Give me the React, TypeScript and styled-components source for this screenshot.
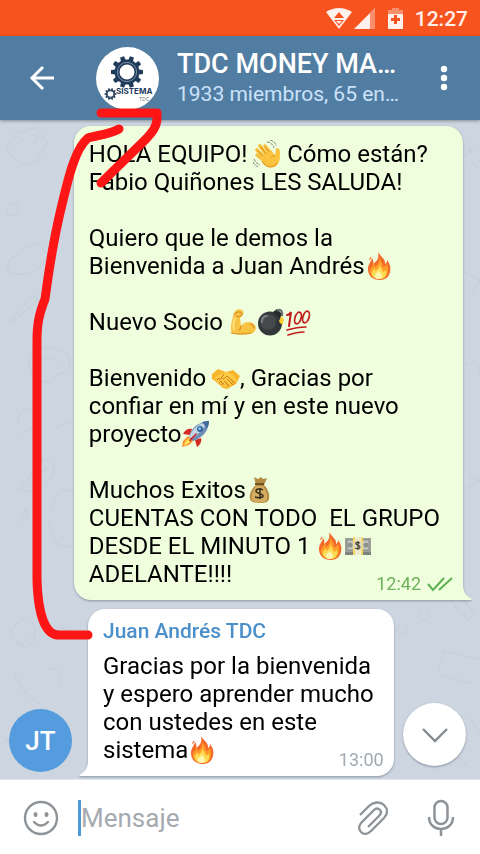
import React from "react";
import styled, { createGlobalStyle, css } from "styled-components";

const GlobalStyle = createGlobalStyle`
  *, *::before, *::after { box-sizing: border-box; }
  body { margin: 0; font-family: Roboto, "Liberation Sans", sans-serif; background: #cdd5e0; }
  button, input { font: inherit; border: 0; padding: 0; margin: 0; background: none; color: inherit; }
  button { cursor: pointer; display: flex; align-items: center; justify-content: center; }
`;

const Screen = styled.div`
  position: relative;
  min-height: 100vh;
  display: flex;
  flex-direction: column;
  overflow: hidden;
`;

const StatusBar = styled.div`
  display: flex;
  align-items: center;
  justify-content: flex-end;
  height: 36px;
  padding: 2px 12px 0;
  background: #f7531e;
  color: #fff0eb;
  font-size: 21px;
  font-weight: 500;
  line-height: 24px;
`;

const StatusIcons = styled.svg`
  margin-right: 11px;
`;

const Header = styled.header`
  position: relative;
  z-index: 1;
  display: flex;
  align-items: center;
  height: 84px;
  padding: 0 14px 0 20px;
  background: #517da2;
  box-shadow: 0 1px 3px rgba(0, 0, 0, 0.35);
`;

const HeaderButton = styled.button`
  flex: none;
  width: 44px;
  height: 48px;
  color: #fff;
`;

const GroupLogo = styled.svg`
  flex: none;
  margin-left: 32px;
`;

const HeaderText = styled.div`
  flex: 1;
  min-width: 0;
  padding: 0 8px 0 18px;
`;

const Title = styled.h1`
  margin: 0;
  color: #fff;
  font-size: 27px;
  font-weight: 500;
  line-height: 32px;
  white-space: nowrap;
`;

const Subtitle = styled.p`
  margin: 0;
  color: #cbe3fb;
  font-size: 21px;
  line-height: 28px;
  white-space: nowrap;
`;

const Chat = styled.main`
  position: relative;
  flex: 1;
  display: flex;
  flex-direction: column;
  justify-content: flex-end;
  gap: 9px;
  padding: 6px 17px 3px 9px;
  background: #cdd5e0;
`;

const Wallpaper = styled.svg`
  position: absolute;
  inset: 0;
  width: 100%;
  height: 100%;
`;

const Bubble = styled.article<{ $own?: boolean }>`
  position: relative;
  display: flex;
  flex-direction: column;
  color: #000;
  font-size: 24px;
  line-height: 28px;
  filter: drop-shadow(0 1px 1px rgba(70, 90, 110, 0.5));
  ${({ $own }) =>
    $own
      ? css`
          align-self: flex-end;
          padding: 14px 10px 6px 15px;
          border-radius: 17px 17px 0 17px;
          background: #efffde;
        `
      : css`
          padding: 8px 10px 6px 15px;
          border-radius: 17px 17px 17px 0;
          background: #fff;
        `}
`;

const Tail = styled.svg<{ $own?: boolean }>`
  position: absolute;
  bottom: 0;
  ${({ $own }) => ($own ? "left: 100%;" : "right: 100%; transform: scaleX(-1);")}
`;

const Sender = styled.h2`
  margin: 0 0 7px;
  color: #4a8fc9;
  font-size: 21px;
  font-weight: 500;
  line-height: 28px;
`;

const Text = styled.p<{ $wide?: boolean }>`
  margin: 0;
  padding-right: ${({ $wide }) => ($wide ? 13 : 10)}px;
  white-space: pre;
`;

const LastLine = styled.div`
  display: flex;
  justify-content: space-between;
  height: 34px;
`;

const Meta = styled.div<{ $own?: boolean }>`
  display: flex;
  align-items: center;
  align-self: flex-end;
  gap: 6px;
  font-size: 18px;
  line-height: 20px;
  color: ${({ $own }) => ($own ? "#70b15c" : "#a1aab3")};
`;

const EmojiSvg = styled.svg`
  display: inline-block;
  vertical-align: -6px;
`;

const IncomingRow = styled.div`
  position: relative;
  display: flex;
  align-items: flex-end;
  gap: 16px;
`;

const Avatar = styled.div`
  display: flex;
  align-items: center;
  justify-content: center;
  width: 63px;
  height: 63px;
  margin-bottom: 4px;
  border-radius: 50%;
  background: #549cdd;
  color: #fff;
  font-size: 26px;
  font-weight: 500;
`;

const ScrollDown = styled.button`
  position: absolute;
  right: 14px;
  bottom: 13px;
  width: 63px;
  height: 63px;
  border-radius: 50%;
  background: #fff;
  box-shadow: 0 1px 2px rgba(60, 80, 100, 0.5);
`;

const Composer = styled.footer`
  position: relative;
  display: flex;
  align-items: center;
  height: 75px;
  padding: 2px 15px 0 17px;
  background: #fff;
  border-top: 1px solid #e3e6ea;
`;

const ToolButton = styled.button`
  flex: none;
  width: 48px;
  height: 48px;
`;

const Field = styled.div`
  flex: 1;
  min-width: 0;
  margin-left: 13px;
  border-left: 3px solid #4d9ad6;
`;

const MessageInput = styled.input`
  display: block;
  width: 100%;
  height: 36px;
  outline: none;
  color: #000;
  font-size: 26px;
  &::placeholder { color: #a5aab0; opacity: 1; }
`;

const Attach = styled(ToolButton)`
  margin-right: 20px;
`;

const Marker = styled.svg`
  position: absolute;
  left: 0;
  top: 0;
  z-index: 2;
  pointer-events: none;
`;

type EmojiName = "wave" | "fire" | "muscle" | "bomb" | "hundred" | "handshake" | "rocket" | "moneybag" | "cash";

const drawings: Record<EmojiName, React.ReactNode> = {
  wave: (
    <>
      <g fill="none" stroke="#f6bd37" strokeLinecap="round">
        <path d="m9 19-5-4" strokeWidth="3.2" />
        <path d="m11 17-7-7" strokeWidth="3.6" />
        <path d="M14 15 7 6" strokeWidth="3.6" />
        <path d="m17 13-5-7" strokeWidth="3.4" />
      </g>
      <path d="M7 18 17 9l5 6c1-2 0-6 2-7 3 0 3 3 3 6 0 7-1 11-6 13-6 2-11-3-14-9Z" fill="#f9c33d" />
      <path d="m10 16-5-5M13 14 8 7M16 12l-4-5M18 18c1-1 3-3 4-2" stroke="#d78e22" strokeWidth=".8" fill="none" />
      <path d="M9 21c4 7 11 8 15 2" stroke="#e8992b" strokeWidth="1.3" fill="none" />
      <path d="M14 2c4 0 6 3 7 6M17 0c4 1 6 4 6 6M1 19c1 3 3 5 6 6M0 22c1 2 3 4 5 5" stroke="#6b6f6a" strokeWidth=".9" strokeDasharray="3 1" fill="none" />
    </>
  ),
  fire: (
    <>
      <path d="M13 0c2 4 8 7 7 12 2-1 2-3 2-4 3 4 4 7 3 12-1 5-5 8-10 8C8 28 3 24 3 17c0-5 3-7 4-11 1 2 2 3 1 6 5-3 6-7 5-12Z" fill="#f46a2a" />
      <path d="M13 3c1 5 5 7 5 12 2 0 3-1 4-3 3 8 0 15-7 15-6 0-11-4-10-9 1-3 3-4 4-7 1 2 0 3 1 4 4-3 5-6 3-12Z" fill="#ff9e27" />
      <path d="M14 11c1 4 4 6 4 9l3-2c1 5-1 9-6 9-6 0-9-3-8-7 1-2 2-3 3-4v3c3-2 5-4 4-8Z" fill="#ffda53" />
      <path d="M14 18c0 3 3 3 3 6 0 2-1 3-3 3-3 0-5-2-4-4 1-2 3-2 4-5Z" fill="#fff6b0" />
      <path d="M4 8c0-2 2-2 2-4 1 2 0 3-2 4Z" fill="#ef622b" />
    </>
  ),
  muscle: (
    <>
      <path d="M5 5c1-3 5-5 8-3 2 1 2 4 0 6l-2 2 1 8c3-5 10-5 13-2 4 4 1 9-4 10-6 1-12 1-18-1C0 19 4 10 5 5Z" fill="#f8c443" />
      <path d="M5 7c3-4 7-4 8-1 0 3-4 3-5 2M12 18c0 2 0 3-2 4M21 16c2 0 4 2 4 4M2 25c8 2 14 1 20 0" stroke="#db8e26" strokeWidth="1.2" fill="none" strokeLinecap="round" />
      <path d="M6 11c-2 4-2 7-1 10" stroke="#ffe07b" strokeWidth="2" fill="none" strokeLinecap="round" />
    </>
  ),
  bomb: (
    <>
      <circle cx="13" cy="15.5" r="12" fill="#33373a" />
      <circle cx="11" cy="14" r="8" fill="#46494c" />
      <path d="M5 14c0-4 2-6 5-6" stroke="#7b8084" strokeWidth="2" fill="none" strokeLinecap="round" />
      <path d="m16 4 4-3 5 5-2 5Z" fill="#252a2e" />
      <path d="M20 3c3-3 6 0 5 5" stroke="#65706c" strokeWidth="2" fill="none" />
      <path d="m24 8 2 2 1 2-1 2v3l-3-2-1-2 1-2Z" fill="#ffcd2e" />
    </>
  ),
  hundred: (
    <g fill="none" stroke="#c01c1a" strokeLinecap="round">
      <path d="M2 7c2 0 3-1 4-3L4 18" strokeWidth="2" />
      <ellipse cx="13" cy="10" rx="3" ry="6" transform="rotate(18 13 10)" strokeWidth="1.8" />
      <ellipse cx="21" cy="9" rx="3" ry="6" transform="rotate(18 21 9)" strokeWidth="1.8" />
      <path d="M2 22c7-2 13-3 19-3M3 27c6-2 11-3 16-3" strokeWidth="1.6" />
    </g>
  ),
  handshake: (
    <>
      <path d="m0 10 6-5 8 3 7-2 7 6-4 8-9 5-4-1-8-7-3-2Z" fill="#f8b62c" />
      <path d="m3 14 5-4 6-2 6 2 5 7c-1 2-2 2-3 1l-5-4 3 5c-1 2-2 2-3 1l-4-4 2 5-3 2-8-7Z" fill="#ffcb45" />
      <path d="m12 10-3 4c2 2 4 0 6-2l8 7M15 15l6 6M12 17l5 5M5 16l2-2 1 2M7 19l2-2 1 2M9 21l2-2 1 2" stroke="#c97b1d" strokeWidth="1" fill="none" />
    </>
  ),
  rocket: (
    <>
      <path d="M10 9C6 8 3 10 1 14l7 1ZM19 18c1 4-1 7-4 9l-2-7Z" fill="#d62824" />
      <path d="m6 16-5 5-1 6 7-2 5-5Z" fill="#ff9130" />
      <path d="m7 18-4 4-1 4 5-3 3-3Z" fill="#ffe551" />
      <path d="M7 17C9 8 16 2 27 1c0 10-7 17-16 20Z" fill="#6d8fb5" />
      <path d="M7 17C10 9 17 3 25 2c-1 5-9 12-15 17Z" fill="#c3d6e6" />
      <path d="M20 2c3-1 5-1 7-1 0 3-1 5-2 7Z" fill="#416b9a" />
      <circle cx="18" cy="9" r="3" fill="#315f94" />
      <circle cx="17.6" cy="8.6" r="1.6" fill="#75bee8" />
      <path d="m7 20 7-7 1 1-7 8Z" fill="#c82e30" />
    </>
  ),
  moneybag: (
    <>
      <path d="m8 1 4 2 3-2 2 2 4-1-3 7c4 4 6 9 5 14-1 3-3 4-9 4S5 26 4 23c-1-5 2-11 6-14Z" fill="#b48b43" />
      <path d="M10 10c-4 5-6 12-3 15 3 2 10 2 13 0 3-5-1-12-3-15Z" fill="#d4ad62" />
      <path d="M9 7h9v2H9Z" fill="#715123" />
      <path d="M17 14c-3-2-7-1-7 1 0 3 7 2 7 5 0 2-5 2-8 1M14 12v11" stroke="#35301e" strokeWidth="1.5" fill="none" />
    </>
  ),
  cash: (
    <>
      <path d="M1 6h26v16H1Z" fill="#9fa29d" />
      <path d="M1 20h26v3H1Z" fill="#7f837d" />
      <path d="M3 8h22v10H3Z" fill="#c6cac2" stroke="#868b83" />
      <circle cx="6" cy="13" r="2.6" fill="#8d938a" />
      <circle cx="22" cy="13" r="2.6" fill="#8d938a" />
      <path d="M9 5h10v18H9Z" fill="#f5d768" />
      <path d="M11 5h6v18h-6Z" fill="#efe9cc" />
      <circle cx="14" cy="13.5" r="4.5" fill="#dedbc0" />
      <path d="M16 11c-2-1-5-1-4 1 1 1 4 1 4 3s-3 2-5 1M14 9v9" stroke="#4d4636" strokeWidth="1.2" fill="none" />
    </>
  ),
};

function Emoji({ name, label }: { name: EmojiName; label: string }) {
  return (
    <EmojiSvg width="28" height="28" viewBox="0 0 28 28" role="img" aria-label={label}>
      {drawings[name]}
    </EmojiSvg>
  );
}

const teeth = [0, 36, 72, 108, 144, 180, 216, 252, 288, 324];

function Gear({ x, y, scale }: { x: number; y: number; scale: number }) {
  return (
    <g transform={`translate(${x} ${y}) scale(${scale})`}>
      {teeth.map((a) => (
        <path key={a} d="M-2.6-11-2-16H2l.6 5Z" fill="#203b5b" transform={`rotate(${a + 18})`} />
      ))}
      <circle r="10" fill="none" stroke="#203b5b" strokeWidth="5" />
      <circle r="9.6" fill="none" stroke="#7f92a5" strokeWidth="1" />
    </g>
  );
}

function Doodles() {
  return (
    <Wallpaper aria-hidden="true">
      <g fill="none" stroke="#bdc6d3" strokeWidth="1.2" opacity=".4">
        <path d="m8 24 9-12 19-4 11 14-10 19-14 4L7 31ZM15 26l8-7M31 16a4 4 0 1 1 0 6M26 32h5" />
        <path d="M8 151q30 12 39-17l-8-10q-14 1-31 18ZM15 145h2m10-7h2m4 8h2M9 201l25-26 4 5-26 22ZM13 84a6 6 0 1 0 0 12 5 5 0 1 0 0-12" />
        <path d="M30 249c-4-17 8-25 23-20 20 0 23 24 5 25-10 13-26 9-28-5m8-5c5-8 20-8 22 0M18 303c0-17 18-18 19-5 0 8-9 14-16 15M56 308l14-6" />
        <path d="m20 369 24-31c19 5 10 29-17 34Zm9-4 18-18M52 388c4-22 19-21 28-11M50 402c0 18 10 28 22 24M21 395l6-6 1 8-8 4Z" />
        <path d="M11 510q18-24 24 0c2 19-20 24-24 0m6 0h2m8 0h2M16 521q8 6 13-4M58 512q12-12 15 6M13 550q9 26 28 34M48 550c9-5 15 6 11 14M5 618q10 11 15 26" />
        <path d="m462 39 12-13m-6 0 5 8m-2 7 8 8M465 153l15 7-8 13M466 245q14-8 14 8M468 353l12 10m-12 5 12-8" />
        <path d="M448 478l20 22 7-6-18-21ZM444 531l36 8M440 555l34 9M444 531l-6 22M424 490a5 5 0 1 1 0 10 5 5 0 0 1 0-10m-22 14a5 5 0 1 1 0 10 5 5 0 0 1 0-10M458 637l12 12M468 596l12 17" />
      </g>
    </Wallpaper>
  );
}

export default function App() {
  return (
    <>
      <GlobalStyle />
      <Screen>
        <StatusBar>
          <StatusIcons width="78" height="24" viewBox="0 0 78 24" aria-hidden="true">
            <path d="M0 5Q13-3 26 5L13 22Z" fill="#fff0eb" />
            <path d="m13 5-5 6h10Zm-5 8h10l-5 6Z" fill="#f7531e" />
            <path d="m10 14 3 3 3-3Z" fill="#fff0eb" />
            <path d="M28 22 49 1v21Z" fill="#fff0eb" />
            <path d="M44 6v16h5V1Z" fill="#f7531e" />
            <path d="M44 6v16h5V1Z" fill="#fff" opacity=".35" />
            <path d="M62 3h4V1h7v2h4v5H62Z" fill="#fff" opacity=".35" />
            <path d="M62 7h15v15H62Z" fill="#fff0eb" />
            <path d="M65 11h3V8h3v3h3v3h-3v3h-3v-3h-3Z" fill="#f7531e" />
          </StatusIcons>
          <time>12:27</time>
        </StatusBar>

        <Header>
          <HeaderButton aria-label="Atrás">
            <svg width="26" height="26" viewBox="0 0 26 26" fill="none" stroke="currentColor" strokeWidth="3">
              <path d="M14 2 3 13l11 11M2 13h23" />
            </svg>
          </HeaderButton>
          <GroupLogo width="63" height="63" viewBox="0 0 63 63" role="img" aria-label="Sistema TDC">
            <circle cx="31.5" cy="31.5" r="31.5" fill="#fff" />
            <Gear x={31} y={25} scale={1} />
            <Gear x={14.5} y={47} scale={0.37} />
            <text x="20" y="47" fontSize="8" fontWeight="700" fill="#243b62" fontFamily="Inter, sans-serif">SISTEMA</text>
            <text x="43" y="54" fontSize="5" fill="#777" fontFamily="Inter, sans-serif">TDC</text>
          </GroupLogo>
          <HeaderText>
            <Title>TDC MONEY MA…</Title>
            <Subtitle>1933 miembros, 65 en…</Subtitle>
          </HeaderText>
          <HeaderButton aria-label="Más opciones">
            <svg width="8" height="26" viewBox="0 0 8 26" fill="currentColor">
              <circle cx="4" cy="4" r="3.2" />
              <circle cx="4" cy="13" r="3.2" />
              <circle cx="4" cy="22" r="3.2" />
            </svg>
          </HeaderButton>
        </Header>

        <Chat>
          <Doodles />
          <Bubble $own>
            <Text $wide>
              HOLA EQUIPO! <Emoji name="wave" label="👋" /> Cómo están?{"\n"}
              Fabio Quiñones LES SALUDA!{"\n\n"}
              Quiero que le demos la{"\n"}
              Bienvenida a Juan Andrés<Emoji name="fire" label="🔥" />{"\n\n"}
              Nuevo Socio <Emoji name="muscle" label="💪" /><Emoji name="bomb" label="💣" /><Emoji name="hundred" label="💯" />{"\n\n"}
              Bienvenido <Emoji name="handshake" label="🤝" />, Gracias por{"\n"}
              confiar en mí y en este nuevo{"\n"}
              proyecto<Emoji name="rocket" label="🚀" />{"\n\n"}
              Muchos Exitos<Emoji name="moneybag" label="💰" />{"\n"}
              {"CUENTAS CON TODO  EL GRUPO\n"}
              DESDE EL MINUTO 1 <Emoji name="fire" label="🔥" /><Emoji name="cash" label="💵" />
            </Text>
            <LastLine>
              <Text>ADELANTE!!!!</Text>
              <Meta $own>
                <time>12:42</time>
                <svg width="26" height="16" viewBox="0 0 26 16" fill="none" stroke="#5fb050" strokeWidth="2" role="img" aria-label="Leído">
                  <path d="m1 8 5 6L17 2M12 14 25 2" />
                </svg>
              </Meta>
            </LastLine>
            <Tail $own width="9" height="16" viewBox="0 0 9 16" aria-hidden="true">
              <path d="M0 0c0 8 3 12 9 15l-1 1H0Z" fill="#efffde" />
            </Tail>
          </Bubble>

          <IncomingRow>
            <Avatar>JT</Avatar>
            <Bubble>
              <Sender>Juan Andrés TDC</Sender>
              <Text>{"Gracias por la bienvenida\ny espero aprender mucho\ncon ustedes en este"}</Text>
              <LastLine>
                <Text>sistema<Emoji name="fire" label="🔥" /></Text>
                <Meta><time>13:00</time></Meta>
              </LastLine>
              <Tail width="9" height="16" viewBox="0 0 9 16" aria-hidden="true">
                <path d="M0 0c0 8 3 12 9 15l-1 1H0Z" fill="#fff" />
              </Tail>
            </Bubble>
          </IncomingRow>

          <ScrollDown aria-label="Ir al final">
            <svg width="26" height="16" viewBox="0 0 26 16" fill="none" stroke="#858a8f" strokeWidth="2.4">
              <path d="m1 2 12 12L25 2" />
            </svg>
          </ScrollDown>
        </Chat>

        <Composer>
          <ToolButton aria-label="Emojis">
            <svg width="36" height="36" viewBox="0 0 36 36" fill="none" stroke="#8e9398" strokeWidth="2.4">
              <circle cx="18" cy="18" r="16" />
              <path d="M11 22q7 7 14 0" strokeLinecap="round" />
              <ellipse cx="12.5" cy="14.5" rx="2" ry="2.5" fill="#8e9398" stroke="none" />
              <ellipse cx="23.5" cy="14.5" rx="2" ry="2.5" fill="#8e9398" stroke="none" />
            </svg>
          </ToolButton>
          <Field>
            <MessageInput aria-label="Mensaje" placeholder="Mensaje" />
          </Field>
          <Attach aria-label="Adjuntar">
            <svg width="32" height="36" viewBox="0 0 32 36" fill="none" stroke="#8e9398" strokeWidth="2.4">
              <path d="M3 15 12 6C16 2 23 1 27 5s4 9 0 13L14 31c-3 3-7 4-10 1s-2-7 1-10L17 10c2-2 4-2 6 0s1 4-1 6L11 27" strokeLinejoin="round" />
            </svg>
          </Attach>
          <ToolButton aria-label="Grabar mensaje de voz">
            <svg width="28" height="38" viewBox="0 0 28 38" fill="none" stroke="#8e9398" strokeWidth="2.5">
              <rect x="7.5" y="2" width="13" height="23" rx="6.5" />
              <path d="M2 18c0 16 24 16 24 0M14 30v7" />
            </svg>
          </ToolButton>
        </Composer>

        <Marker width="480" height="854" viewBox="0 0 480 854" fill="none" stroke="#fd1615" strokeWidth="9" strokeLinecap="round" strokeLinejoin="round" aria-hidden="true">
          <path d="M101 113h56c1 12-3 18-13 28l-43 42" />
          <path d="M119 129c-11 6-22 6-31 9-14 11-21 46-28 75-7 30-11 56-15 86-6 15-8 25-8 42v239c1 34 8 55 22 55h29" />
        </Marker>
      </Screen>
    </>
  );
}
